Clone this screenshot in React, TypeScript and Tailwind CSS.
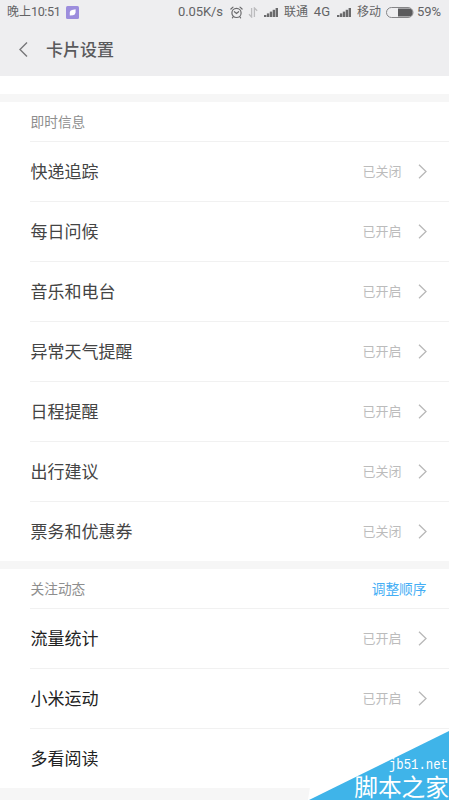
import clsx from 'clsx'

type Card = { name: string; status?: string }

const infoCards: Card[] = [
  { name: '快递追踪', status: '已关闭' },
  { name: '每日问候', status: '已开启' },
  { name: '音乐和电台', status: '已开启' },
  { name: '异常天气提醒', status: '已开启' },
  { name: '日程提醒', status: '已开启' },
  { name: '出行建议', status: '已关闭' },
  { name: '票务和优惠券', status: '已关闭' },
]

const feedCards: Card[] = [
  { name: '流量统计', status: '已开启' },
  { name: '小米运动', status: '已开启' },
  { name: '多看阅读' },
]

function Signal() {
  return (
    <svg className="w-[14px] h-[9px] shrink-0" viewBox="0 0 14 9" fill="#6a6a6c">
      <rect x="0" y="7" width="2.4" height="2" />
      <rect x="2.9" y="5.4" width="2.4" height="3.6" />
      <rect x="5.8" y="3.6" width="2.4" height="5.4" />
      <rect x="8.7" y="1.8" width="2.4" height="7.2" />
      <rect x="11.6" y="0" width="2.4" height="9" />
    </svg>
  )
}

function StatusBar() {
  return (
    <div className="h-6 pl-[7px] pr-[6px] flex items-center text-[12px] leading-6 text-[#636365] whitespace-nowrap font-[Roboto,'Noto_Sans_CJK_SC',sans-serif]">
      <span className="w-[54px]">晚上<span className="text-[12.6px] tracking-[-0.4px]">10:51</span></span>
      <svg className="ml-[5px] w-[13px] h-[13px] shrink-0" viewBox="0 0 13 13">
        <rect width="13" height="13" rx="1.5" fill="#9c8ddd" />
        <path d="M3.8 9.6V6.3Q4 4.2 6 3.9L9.6 3.2V6.5Q9.2 9 7 9.3Z" fill="#fff" />
      </svg>
      <span className="ml-auto w-[47px] text-[13px] tracking-[-0.1px]">0.05K/s</span>
      <svg className="ml-[5px] w-[13px] h-[13px] shrink-0" viewBox="0 0 13 13" fill="none" stroke="#6a6a6c" strokeWidth="1.2" strokeLinecap="round">
        <circle cx="6.5" cy="6.9" r="4.6" />
        <path d="M4.4 5.7L6.5 7.4L8.6 5.7M0.9 3L3 1.1M12.1 3L10 1.1M3.3 10.7L2.4 11.8M9.7 10.7L10.6 11.8" />
      </svg>
      <svg className="ml-[5px] w-[10px] h-[11px] shrink-0" viewBox="0 0 10 11" fill="none" stroke="#bcbcbe" strokeWidth="1.3">
        <path d="M3.6 1V10L1 7.2M6.4 10V1L9.2 3.8" />
      </svg>
      <span className="ml-[6px] flex"><Signal /></span>
      <span className="ml-[6px] w-[46px] flex justify-between"><span>联通</span><span className="text-[13px]">4G</span></span>
      <span className="ml-[7px] flex"><Signal /></span>
      <span className="ml-[6px] w-6">移动</span>
      <svg className="ml-[5px] w-[28px] h-[11px] shrink-0" viewBox="0 0 28 11">
        <rect x="0.5" y="0.5" width="26.5" height="10" rx="5" fill="none" stroke="#858587" />
        <path d="M12 1.5H22.5a4 4 0 0 1 0 8H12Z" fill="#5a5a5c" />
      </svg>
      <span className="ml-[3px] w-[26px] text-[13px] tracking-[-0.1px]">59%</span>
    </div>
  )
}

function CardRow({ card, dark }: { card: Card; dark?: boolean }) {
  return (
    <div className="ml-[30px] pr-[22.5px] h-[60px] border-t border-[#f1f1f1] flex items-center">
      <span className={clsx('ml-[0.5px] mb-px text-[17px] leading-6', dark ? 'text-[#222]' : 'text-[#444]')}>{card.name}</span>
      {card.status && (
        <>
          <span className="ml-auto mb-px text-[13px] leading-5 text-[#bcbcbc]">{card.status}</span>
          <svg className="ml-[16px] mb-px w-[9px] h-[16px]" viewBox="0 0 9 16" fill="none" stroke="#b8b8b8" strokeWidth="1.3">
            <path d="M1 1.7L8 8.5L1 15.3" />
          </svg>
        </>
      )}
    </div>
  )
}

function SectionTitle({ title, action }: { title: string; action?: string }) {
  return (
    <div className="h-[39px] pl-[30.5px] pr-[22.5px] pb-px flex items-center justify-between text-[13.7px] leading-5">
      <span className="text-[#8e8e8e]">{title}</span>
      {action && <button className="text-[#45aef5]">{action}</button>}
    </div>
  )
}

function Watermark() {
  return (
    <div className="absolute right-0 bottom-0 w-[142px] h-[70px] text-white whitespace-nowrap">
      <svg className="absolute inset-0 w-full h-full" viewBox="0 0 142 70">
        <path d="M3 57L17 27L60 12L142 0V70H1Z" fill="#fff" />
        <path d="M142 1V70H2Z" fill="#3fb4e9" />
      </svg>
      <div className="absolute right-0 bottom-[2px] flex flex-col items-end">
        <span className="mr-px text-[12.3px] leading-[14px] scale-y-120 origin-bottom font-['Liberation_Mono',monospace]">jb51.net</span>
        <span className="text-[23.7px] leading-6">脚本之家</span>
      </div>
    </div>
  )
}

export default function App() {
  return (
    <div className="relative w-[449px] h-[800px] overflow-hidden bg-[#f6f6f6] font-['Noto_Sans_CJK_SC',sans-serif]">
      <header className="h-[76px] bg-[#eeeef0]">
        <StatusBar />
        <div className="h-[52px] pl-[19px] flex items-center">
          <svg className="w-[9px] h-[16px]" viewBox="0 0 9 16" fill="none" stroke="#777779" strokeWidth="1.4">
            <path d="M8 0.5L1 7.5L8 14.5" />
          </svg>
          <h1 className="ml-[18px] mb-[2px] text-[17px] leading-6 font-medium text-[#5a5a5c]">卡片设置</h1>
        </div>
      </header>
      <div className="h-[18px] bg-white" />
      <section className="mt-2 bg-white">
        <SectionTitle title="即时信息" />
        {infoCards.map(card => <CardRow key={card.name} card={card} />)}
      </section>
      <section className="mt-2 bg-white">
        <SectionTitle title="关注动态" action="调整顺序" />
        {feedCards.map(card => <CardRow key={card.name} card={card} dark />)}
      </section>
      <Watermark />
    </div>
  )
}
